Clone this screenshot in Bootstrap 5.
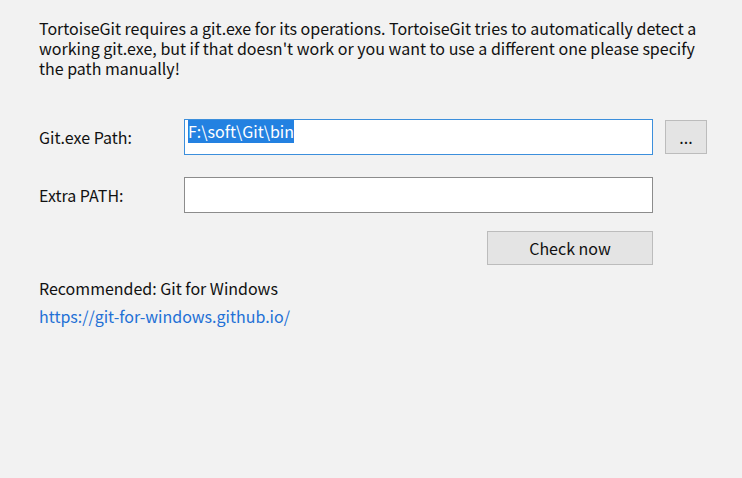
<!DOCTYPE html>
<html lang="en">
<head>
<meta charset="utf-8">
<meta name="viewport" content="width=device-width, initial-scale=1">
<title>TortoiseGit – git.exe path</title>
<link href="https://cdn.jsdelivr.net/npm/bootstrap@5.3.0/dist/css/bootstrap.min.css" rel="stylesheet">
<style>
  body {
    background: #f2f2f2;
    color: #111;
    font-family: "Noto Sans CJK SC", "Open Sans", sans-serif;
    font-size: 16px;
    line-height: 20px;
  }
  .wizard-page { padding: 18px 35px 18px 39px; }
  .settings {
    display: grid;
    grid-template-columns: 133px minmax(0, 1fr) 42px;
    column-gap: 12px;
    row-gap: 22px;
    margin-top: 41px;
    margin-bottom: 13px;
  }
  .path-box {
    height: 36px;
    padding: 0 3px 12px;
    font-size: 16px;
    line-height: 20px;
    color: #111;
    border-color: #8c8c8c;
    transition: none;
  }
  .path-box:focus {
    border-color: #3c8fdc;
    box-shadow: none;
    color: #111;
  }
  .path-box::selection { background: #2381e1; color: #fff; }
  .push-btn {
    height: 34px;
    font-size: 16px;
    line-height: 20px;
    color: #111;
    background: #e4e4e4;
    border-color: #bcbcbc;
  }
  .push-btn:hover { background: #e5f1fb; border-color: #3c8fdc; }
  .check-btn { width: 166px; grid-column: 2; margin-top: -4px; }
  .site-link { color: #2370d6; }
</style>
</head>
<body>
<main class="wizard-page">
  <p class="mb-0">TortoiseGit requires a git.exe for its operations. TortoiseGit tries to automatically detect a working git.exe, but if that doesn't work or you want to use a different one please specify the path manually!</p>
  <form class="settings align-items-center">
    <label for="gitPath">Git.exe Path:</label>
    <input id="gitPath" type="text" class="form-control rounded-0 path-box" value="F:\soft\Git\bin" spellcheck="false" autofocus>
    <button type="button" class="btn rounded-0 p-0 push-btn" aria-label="Browse">...</button>
    <label for="extraPath">Extra PATH:</label>
    <input id="extraPath" type="text" class="form-control rounded-0 path-box" spellcheck="false">
    <button type="button" class="btn rounded-0 p-0 push-btn check-btn ms-auto">Check now</button>
  </form>
  <p class="mb-2">Recommended: Git for Windows</p>
  <a class="site-link text-decoration-none" href="https://git-for-windows.github.io/">https://git-for-windows.github.io/</a>
</main>
<script src="https://cdn.jsdelivr.net/npm/bootstrap@5.3.0/dist/js/bootstrap.bundle.min.js"></script>
<script>
  const gitPath = document.getElementById("gitPath");
  gitPath.focus();
  gitPath.select();
</script>
</body>
</html>
